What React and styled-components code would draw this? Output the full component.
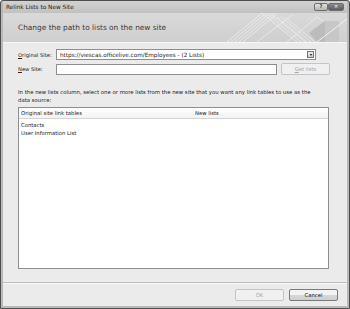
import React from "react"
import styled, { createGlobalStyle } from "styled-components"

const Global = createGlobalStyle`
  html, body { margin: 0; padding: 0; background: #fff; }
  body { font-family: "DejaVu Sans", "Liberation Sans", sans-serif; }
`

const Window = styled.div`
  width: 350px;
  height: 309px;
  box-sizing: border-box;
  border: 1px solid #4d4d4d;
  border-radius: 3px 3px 0 0;
  background: #b9b9b9;
  padding: 0 2px 2px 2px;
  display: flex;
  flex-direction: column;
`

const TitleBar = styled.div`
  height: 12px;
  display: flex;
  align-items: center;
  justify-content: space-between;
  padding-left: 3px;
  background: linear-gradient(#d2d2d2, #c1c1c1);
`

const Title = styled.span`
  font-size: 5.8px;
  color: #222;
`

const Controls = styled.div`
  display: flex;
  margin-right: 3px;
  margin-top: -1px;
`

const CtlButton = styled.div`
  width: ${p => p.$w}px;
  height: 8px;
  box-sizing: border-box;
  border: 1px solid #6f6f6f;
  border-radius: 2px;
  background: ${p => (p.$dark ? "linear-gradient(#8a8a8a, #5c5c5c)" : "linear-gradient(#e2e2e2, #b4b4b4)")};
  color: ${p => (p.$dark ? "#fff" : "#333")};
  font-size: 5px;
  font-weight: bold;
  display: flex;
  align-items: center;
  justify-content: center;
  line-height: 1;
`

const Body = styled.div`
  flex: 1;
  display: flex;
  flex-direction: column;
  background: #ebebeb;
`

const Header = styled.div`
  position: relative;
  height: 29px;
  background: linear-gradient(#d9d9d9, #cfcfcf);
  border-bottom: 1px solid #f6f6f6;
  display: flex;
  align-items: center;
  padding-left: 15px;
  overflow: hidden;
`

const HeaderText = styled.h1`
  margin: 0;
  font-weight: normal;
  font-size: 7.4px;
  color: #3a3a3a;
  position: relative;
  z-index: 1;
`

const Deco = styled.svg`
  position: absolute;
  right: 0;
  top: 0;
`

const Content = styled.div`
  flex: 1;
  padding: 6px 15px 0 15px;
  display: flex;
  flex-direction: column;
`

const FieldRow = styled.div`
  display: flex;
  align-items: center;
  height: ${p => p.$h}px;
  margin-bottom: ${p => p.$mb || 0}px;
`

const Label = styled.span`
  width: 38px;
  font-size: 5.2px;
  color: #222;
  span { text-decoration: underline; }
`

const Combo = styled.div`
  flex: 1;
  height: 11px;
  box-sizing: border-box;
  border: 1px solid #8e8e8e;
  background: #fff;
  display: flex;
  align-items: center;
  justify-content: space-between;
  padding-left: 3px;
  margin-right: 16px;
  font-size: 5.7px;
  color: #222;
`

const Arrow = styled.div`
  width: 7px;
  height: 7px;
  margin-right: 1px;
  box-sizing: border-box;
  border: 1px solid #777;
  background: linear-gradient(#eee, #c8c8c8);
  display: flex;
  align-items: center;
  justify-content: center;
  &::after {
    content: "";
    border-left: 1.5px solid transparent;
    border-right: 1.5px solid transparent;
    border-top: 2px solid #111;
  }
`

const Input = styled.div`
  width: 221px;
  height: 11px;
  box-sizing: border-box;
  border: 1px solid #8e8e8e;
  background: #fff;
`

const Button = styled.div`
  width: ${p => p.$w || 49}px;
  height: ${p => p.$h || 12}px;
  box-sizing: border-box;
  border: 1px solid ${p => (p.$disabled ? "#c4c4c4" : "#7a7a7a")};
  border-radius: 2px;
  background: ${p => (p.$disabled ? "#f0f0f0" : "linear-gradient(#f3f3f3 45%, #d6d6d6 55%, #cfcfcf)")};
  color: ${p => (p.$disabled ? "#a8a8a8" : "#222")};
  font-size: 5.3px;
  display: flex;
  align-items: center;
  justify-content: center;
  margin-left: ${p => p.$ml || 0}px;
  span { text-decoration: underline; }
`

const Instructions = styled.p`
  margin: 13px 0 3px 0;
  max-width: 300px;
  font-size: 5.35px;
  line-height: 8px;
  color: #222;
`

const ListBox = styled.div`
  height: 162px;
  width: 311px;
  box-sizing: border-box;
  border: 1px solid #8e8e8e;
  background: #fff;
  display: flex;
  flex-direction: column;
`

const ListHead = styled.div`
  height: 10px;
  display: grid;
  grid-template-columns: 174px 1fr;
  align-items: center;
  border-bottom: 1px solid #d5d5d5;
  background: linear-gradient(#fff, #f3f3f3);
  font-size: 5.3px;
  color: #222;
  padding-left: 2px;
`

const ListRows = styled.div`
  padding: 2px 0 0 2px;
  font-size: 5.3px;
  line-height: 8px;
  color: #222;
`

const Footer = styled.div`
  height: 23px;
  border-top: 1px solid #bdbdbd;
  box-shadow: inset 0 1px 0 #f8f8f8;
  display: flex;
  align-items: center;
  justify-content: flex-end;
  padding-right: 9px;
`

function HeaderDeco() {
  return (
    <Deco width="180" height="29" viewBox="0 0 180 29">
      <g stroke="#eeeeee" strokeWidth="0.8" fill="none">
        <path d="M60 29 L95 0" />
        <path d="M64 29 L99 0" />
        <path d="M68 29 L103 0" />
        <path d="M72 29 L107 0" />
        <path d="M76 29 L111 0" />
        <path d="M95 0 L130 29" />
        <path d="M99 0 L134 29" />
        <path d="M103 0 L138 29" />
        <path d="M110 4 L140 29" />
        <path d="M114 4 L144 29" />
        <path d="M118 4 L148 29" />
        <path d="M90 29 L125 2" />
        <path d="M120 29 L150 4 L170 18" />
      </g>
      <path d="M142 20 L158 8 L158 29 L150 29 Z" fill="#bcbcbc" />
      <path d="M158 8 L172 8 L172 29 L158 29 Z" fill="#c7c7c7" />
      <path d="M150 29 L180 6" stroke="#f2f2f2" strokeWidth="1" />
    </Deco>
  )
}

export default function App() {
  return (
    <>
      <Global />
      <Window>
        <TitleBar>
          <Title>Relink Lists to New Site</Title>
          <Controls>
            <CtlButton $w={14}>?</CtlButton>
            <CtlButton $w={16} $dark>✕</CtlButton>
          </Controls>
        </TitleBar>
        <Body>
          <Header>
            <HeaderText>Change the path to lists on the new site</HeaderText>
            <HeaderDeco />
          </Header>
          <Content>
            <FieldRow $h={11} $mb={3}>
              <Label><span>O</span>riginal Site:</Label>
              <Combo>
                https://viescas.officelive.com/Employees - (2 Lists)
                <Arrow />
              </Combo>
            </FieldRow>
            <FieldRow $h={12}>
              <Label><span>N</span>ew Site:</Label>
              <Input />
              <Button $disabled $ml={4}><span>G</span>et lists</Button>
            </FieldRow>
            <Instructions>
              In the new lists column, select one or more lists from the new site that you want any link tables to use as the data source:
            </Instructions>
            <ListBox>
              <ListHead>
                <span>Original site link tables</span>
                <span>New lists</span>
              </ListHead>
              <ListRows>
                <div>Contacts</div>
                <div>User Information List</div>
              </ListRows>
            </ListBox>
          </Content>
          <Footer>
            <Button $disabled $h={12}>OK</Button>
            <Button $ml={5} $h={12}>Cancel</Button>
          </Footer>
        </Body>
      </Window>
    </>
  )
}
